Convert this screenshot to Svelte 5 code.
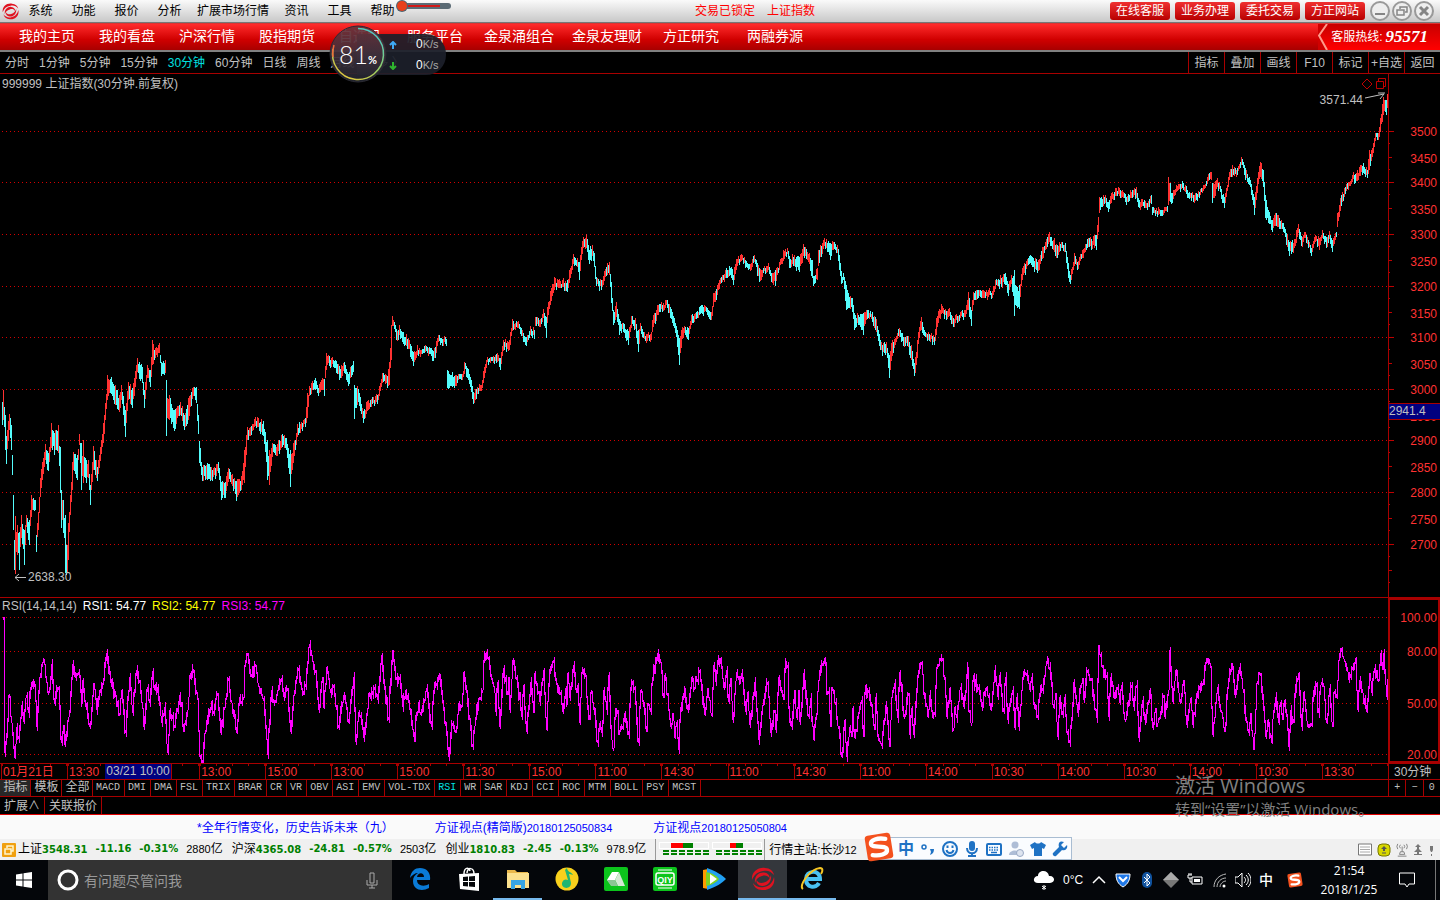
<script>
  const menus = ['系统', '功能', '报价', '分析', '扩展市场行情', '资讯', '工具', '帮助'];
  const services = ['在线客服', '业务办理', '委托交易', '方正网站'];
  const navs = ['我的主页', '我的看盘', '沪深行情', '股指期货', '自选股', '服务平台', '金泉涌组合', '金泉友理财', '方正研究', '两融券源'];
  const periods = ['分时', '1分钟', '5分钟', '15分钟', '30分钟', '60分钟', '日线', '周线', '月线', '更多 〉'];
  const tools = ['指标', '叠加', '画线', 'F10', '标记', '+自选', '返回'];
  const times = ['01月21日', '13:30', '', '13:00', '15:00', '13:00', '15:00', '11:30', '15:00', '11:00', '14:30', '11:00', '14:30', '11:00', '14:00', '10:30', '14:00', '10:30', '14:00', '10:30', '13:30'];
  const indicators = ['MACD', 'DMI', 'DMA', 'FSL', 'TRIX', 'BRAR', 'CR', 'VR', 'OBV', 'ASI', 'EMV', 'VOL-TDX', 'RSI', 'WR', 'SAR', 'KDJ', 'CCI', 'ROC', 'MTM', 'BOLL', 'PSY', 'MCST'];
  const quotes = [
    { name: '上证', last: '3548.31', diff: '-11.16', pct: '-0.31%', amount: '2880' },
    { name: '沪深', last: '4365.08', diff: '-24.81', pct: '-0.57%', amount: '2503' },
    { name: '创业', last: '1810.83', diff: '-2.45', pct: '-0.13%', amount: '978.9' }
  ];
  const gridY = [131, 182, 234, 286, 337, 389, 440, 492, 544];
  const priceMarks = [[3500, 131], [3450, 158], [3400, 182], [3350, 209], [3300, 234], [3250, 261], [3200, 286], [3150, 313], [3100, 337], [3050, 364], [3000, 389], [2950, 416], [2900, 440], [2850, 467], [2800, 492], [2750, 519], [2700, 544]];
  const rsiMarks = [['100.00', 617], ['80.00', 651], ['50.00', 703], ['20.00', 754]];

  // x, high, low
  const price = `2 402 425,3 390 420,5 415 450,6 436 464,9 414 430,11 425 450,12 455 475,13 495 530,14 540 570,15 516 574,17 525 555,19 532 570,21 515 538,24 530 565,26 515 527,29 520 545,31 495 517,33 498 510,35 500 510,36 535 552,38 512 530,40 478 497,42 462 480,45 444 460,48 453 471,51 423 448,54 433 455,58 425 453,60 447 493,61 490 528,63 500 533,65 515 573,66 545 575,67 545 573,68 523 560,70 495 515,72 462 490,73 452 470,77 455 480,79 434 445,81 443 490,83 440 483,86 460 483,88 460 478,90 485 505,93 446 470,97 467 481,100 447 460,103 423 443,105 403 420,107 375 400,110 379 393,115 385 405,119 395 412,121 385 400,125 410 437,128 382 400,132 388 408,137 358 372,142 367 383,144 390 408,147 365 378,150 370 387,152 340 365,155 348 358,159 343 353,161 362 376,165 360 373,166 380 436,169 395 420,174 410 431,180 402 415,184 415 430,188 398 420,192 388 398,196 387 403,198 415 434,199 441 463,202 467 481,207 463 480,212 470 481,218 462 473,221 482 500,225 482 498,228 468 482,232 474 486,236 481 501,241 476 490,244 450 483,247 427 440,250 427 436,255 417 426,263 421 436,267 440 480,269 450 485,272 443 455,277 444 456,281 435 448,286 438 450,290 450 487,295 440 450,297 424 436,305 418 427,307 393 418,309 386 396,315 378 390,318 388 396,322 378 390,324 379 396,326 353 370,329 356 366,333 360 367,339 366 380,344 362 373,348 374 386,353 361 372,354 385 419,358 389 402,363 411 423,368 400 410,377 395 404,382 373 380,387 376 388,389 362 385,391 325 360,392 316 326,397 331 341,399 325 335,403 332 344,408 338 349,413 352 366,417 345 355,420 350 357,425 345 352,432 350 361,435 347 358,438 335 342,446 339 346,447 370 388,454 376 388,462 374 380,464 362 371,468 369 380,473 392 404,479 384 391,481 385 391,484 367 378,487 357 362,493 356 363,497 353 362,500 358 370,503 340 350,509 340 350,512 319 328,517 322 328,521 328 336,526 337 346,530 326 333,534 330 339,535 317 326,540 319 327,543 309 318,546 317 338,548 302 311,551 288 301,554 277 290,560 281 288,567 280 292,569 270 283,573 254 264,577 258 267,579 262 280,582 241 252,586 234 248,589 250 264,592 245 256,594 253 267,596 277 286,601 280 290,604 271 280,609 262 275,611 282 303,613 310 325,616 302 317,619 320 335,623 323 332,628 331 345,631 316 325,635 318 329,638 330 352,640 323 331,646 334 343,651 332 340,652 320 332,657 305 315,663 303 311,667 300 308,670 307 318,675 323 333,678 335 355,679 338 365,681 330 348,684 326 333,688 328 340,691 315 325,697 311 318,702 305 314,707 308 315,711 312 320,713 293 307,717 285 295,721 277 283,726 268 278,731 267 278,733 275 285,736 259 270,741 254 261,745 260 268,750 264 271,754 255 262,759 268 282,763 268 273,768 263 270,771 274 282,775 270 286,779 262 268,784 251 259,787 248 254,789 258 268,794 255 266,799 257 272,803 244 256,808 254 262,812 260 278,813 276 286,817 268 280,818 250 266,824 238 246,830 243 260,832 241 250,837 245 253,839 255 270,841 273 284,843 273 280,846 285 310,849 297 308,852 298 312,854 313 330,858 315 325,863 313 335,866 310 320,870 311 317,875 317 330,878 330 341,882 345 356,886 342 353,889 355 378,892 340 356,895 338 345,899 328 337,903 337 346,907 336 346,911 345 360,914 363 376,917 340 358,919 327 335,921 317 330,925 332 337,928 332 340,934 337 345,936 318 335,941 304 313,946 311 320,949 308 316,953 318 327,960 312 318,965 310 317,968 292 310,971 310 326,973 292 302,978 290 298,988 290 297,992 291 298,995 280 288,1005 273 285,1008 284 296,1011 275 281,1014 270 316,1017 287 308,1019 285 309,1022 268 280,1030 255 263,1037 262 273,1043 247 258,1049 232 242,1056 244 258,1061 242 248,1065 243 252,1068 263 278,1070 275 284,1074 253 265,1077 262 270,1082 250 258,1088 238 247,1096 235 250,1098 217 230,1099 197 213,1105 195 203,1108 202 212,1111 193 203,1116 188 196,1122 190 197,1126 197 205,1130 190 198,1136 187 198,1139 200 208,1147 203 210,1151 195 204,1152 207 215,1160 210 216,1167 206 212,1168 177 205,1172 193 203,1176 185 192,1183 183 190,1187 191 198,1194 195 203,1202 188 193,1207 177 183,1211 172 180,1212 183 203,1217 178 187,1224 197 208,1228 177 183,1232 165 177,1236 170 177,1241 157 163,1245 168 180,1250 180 187,1254 197 215,1257 178 190,1260 162 177,1263 170 187,1265 195 218,1268 210 223,1272 220 232,1275 213 226,1283 223 232,1289 242 256,1293 243 253,1298 224 233,1302 237 247,1304 232 238,1311 248 256,1315 235 242,1319 238 250,1322 230 237,1326 237 248,1329 231 238,1332 240 252,1336 232 237,1337 213 227,1341 195 206,1345 187 194,1352 175 182,1357 170 181,1363 163 173,1367 170 178,1369 150 170,1372 148 157,1375 133 140,1378 133 140,1380 118 130,1383 97 115,1386 100 115,1387 94 107`
    .split(',').map((s) => s.split(' ').map(Number));

  let seed = 77;
  const rnd = () => ((seed = (seed * 16807) % 2147483647) / 2147483647);

  function candles() {
    const out = { up: '', down: '' };
    let prev = 400;
    for (let i = 0; i < price.length; i++) {
      const [x0, h0, l0] = price[i];
      const [x1, h1, l1] = price[i + 1] ?? [x0 + 1, h0, l0];
      for (let x = x0; x < x1; x++) {
        const t = (x - x0) / (x1 - x0);
        let hi = h0 + (h1 - h0) * t;
        let lo = l0 + (l1 - l0) * t;
        if (x !== x0) {
          const mid = (hi + lo) / 2 + (rnd() - 0.5) * 5;
          const half = Math.min(10, ((lo - hi) / 2) * (0.6 + rnd() * 0.5));
          hi = mid - half;
          lo = mid + half;
        }
        const mid = (hi + lo) / 2;
        const key = mid - prev + (rnd() - 0.45) * 8 > 0 ? 'down' : 'up';
        if (Math.abs(mid - prev) < 9) {
          if (prev < hi) hi = prev;
          if (prev > lo) lo = prev;
        }
        prev = mid;
        out[key] += `M${x}.5 ${Math.round(hi) - 74}V${Math.round(lo) - 74}`;
      }
    }
    return out;
  }
  const bars = candles();

  // Turning points in thirds of a pixel, in three stretches of the time axis.
  const stretches = [
    [0, 0, '10 82,13 490,18 430,25 315,33 400,43 505,48 410,55 445,63 345,68 395,77 315,83 370,92 275,103 290,108 410,118 260,125 215,133 225,140 310,147 290,154 222,160 330,173 290,182 460,188 405,193 465,205 380,217 222,225 265,235 245,245 380,247 270,255 350,268 410,280 280,287 360,297 300,308 265,318 190,330 280,345 320,357 375,362 300,374 430,387 260,395 370,408 240,418 280,430 410,440 290,448 340,456 242,462 300,472 290,482 400,493 350,500 490,508 360,522 405,538 315,550 425,560 360,568 255,578 250,590 330,597 500,605 510,615 420,630 350,640 365,650 310,660 430,672 350,683 265,693 340,708 430,717 320,728 325,733 225,741 190,750 260,765 230,775 290,790 330,800 495,812 300,820 340,830 300,842 265,848 320,860 300,870 425,882 300,893 235,903 300,915 290,925 170,935 215,945 250,955 360,965 260,968 355,979 230,990 310,1000 290,1013 410,1030 315,1043 400,1060 260,1065 455,1075 365,1090 445,1105 310,1115 315,1122 290,1130 330,1143 195,1153 300,1163 385,1175 180,1187 265,1197 260,1205 350,1215 300,1228 360,1240 440,1255 335,1260 375,1278 295,1292 410,1298 300,1315 255,1327 340,1344 500,1355 400,1365 425,1375 340,1383 345,1390 245,1397 310,1415 470,1425 380,1437 320'],
    [1440, 120, '0 205,7 180,10 90,18 65,25 85,32 150,40 170,46 245,50 155,58 290,68 115,80 195,85 140,88 240,97 90,108 140,123 260,128 165,137 305,150 155,158 250,163 130,178 215,188 120,197 300,203 160,218 90,228 165,240 185,245 245,255 175,260 250,262 130,268 205,278 105,287 190,292 165,296 280,303 125,315 140,320 240,328 270,331 185,340 240,350 340,357 280,364 310,370 180,378 240,383 135,392 330,399 355,403 260,410 240,415 315,425 290,432 250,443 315,450 170,462 170,473 340,480 180,490 230,498 305,502 220,510 245,515 140,532 68,540 100,548 205,553 135,560 190,570 290,577 250,583 325,587 275,593 360,600 230,610 190,622 240,633 140,642 170,658 120,672 255,682 175,692 255,700 105,706 155,712 90,721 85,730 175,737 120,743 215,750 145,757 270,768 125,775 150,784 130,795 245,801 185,808 285,823 155,835 330,847 225,860 155,871 310,881 240,886 300,895 140,908 210,912 115,920 105,926 280,934 290,941 180,948 265,955 180,958 275,970 130,983 260,990 205,998 330,1008 250,1013 150,1025 105,1037 90,1038 195,1045 185,1050 290,1054 170,1065 215,1073 295,1083 380,1092 270,1097 380,1107 290,1112 320,1115 235,1122 325,1135 245,1143 210,1148 320,1153 185,1163 180,1172 230,1182 300,1186 200,1192 320,1202 345,1216 225,1227 350,1232 200,1242 160,1250 265,1257 125,1270 260,1283 190,1288 315,1292 235,1300 315,1313 120,1324 95,1330 195,1342 260,1348 195,1355 265,1362 250,1367 110,1385 90,1393 150,1398 260,1408 175,1412 260,1418 295,1422 230,1428 265,1437 180'],
    [2820, 0, '60 290,70 350,83 215,85 365,92 400,97 270,115 290,123 350,137 290,150 360,163 240,170 320,178 255,188 365,194 260,200 390,215 300,223 415,227 320,235 410,245 260,255 250,267 300,272 260,280 345,292 380,297 310,307 300,317 212,328 230,338 355,345 310,350 440,357 320,367 375,373 320,378 430,388 460,400 275,410 370,425 265,428 330,440 240,450 265,467 385,475 165,485 235,498 255,505 380,510 260,520 325,530 290,537 340,543 285,552 390,572 285,578 350,587 285,595 445,605 330,613 390,628 300,635 415,645 355,648 410,658 380,668 315,672 380,683 300,686 180,697 335,706 240,718 335,728 270,738 405,750 325,755 405,768 310,785 280,799 205,810 235,815 435,822 380,830 290,842 365,852 425,863 265,874 220,882 315,898 232,908 310,918 400,923 430,929 370,940 480,948 280,960 255,975 440,982 390,993 460,998 360,1006 320,1013 400,1020 335,1025 390,1030 340,1038 380,1045 470,1050 360,1058 400,1062 310,1073 250,1082 410,1090 305,1100 410,1113 400,1118 300,1127 290,1133 370,1140 285,1148 290,1157 400,1167 295,1175 410,1180 305,1187 325,1195 210,1204 175,1212 215,1225 270,1235 230,1245 205,1250 360,1257 270,1265 310,1277 365,1287 250,1292 310,1303 235,1313 270,1319 190,1325 240,1328 190,1337 320,1343 265']
  ];
  function rsiPath() {
    const pts = stretches.flatMap(([dx, dy, s]) => s.split(',').map((p) => {
      const [x, y] = p.split(' ').map(Number);
      return [(x + dx) / 3, (y + dy) / 3 - 8];
    }));
    let d = '';
    let last = pts[0][1];
    pts.forEach(([x0, y0], i) => {
      const [x1, y1] = pts[i + 1] ?? [x0 + 1, y0];
      for (let x = Math.round(x0); x < Math.round(x1); x++) {
        const t = (x - x0) / (x1 - x0);
        const edge = x === Math.round(x0);
        const y = edge ? y0 : y0 + (y1 - y0) * t + (rnd() - 0.5) * 10;
        const grow = edge ? 0 : rnd() * 5;
        const a = Math.round(Math.min(last, y) - grow);
        const b = Math.max(a + 3, Math.round(Math.max(last, y) + grow));
        d += `M${x}.5 ${a}V${b}`;
        last = y;
      }
    });
    return d;
  }
  const rsi = rsiPath();
</script>

{#snippet swirl()}
  <svg viewBox="0 0 24 24"><g fill="#e01220"><path d="M1 13C0 5 7 0 14 1c5 0 8 3 9 7-3-4-7-5-11-4C6 5 3 8 1 13z"/><path d="M23 10c2 8-5 14-12 13-5 0-8-3-9-7 3 4 7 5 11 4 6-1 9-5 10-10z"/><path d="M4 16C3 9 8 5 13 5.500c4 .5 6 3 5.500 6C17 8.500 14 8 11 9c-4 1-6 3.500-7 7z"/><path d="M20 8c1 7-4 11.500-9 11-4-.5-6-3-5.500-6 1.500 3 4.500 3.500 7.500 2.500 4-1 6-4 7-7.500z"/></g></svg>
{/snippet}
{#snippet sogou()}
  <svg viewBox="0 0 28 28"><g transform="rotate(-9 14 14)"><rect x="2" y="2" width="24" height="24" rx="3" fill="#f4511e"/><path fill="none" stroke="#fff" stroke-width="4" stroke-linecap="round" d="M21 7.500C14 5 7 6.500 7 10C7 14.500 21 12.500 21 17.500C21 22 13 22.500 7 20.500"/></g></svg>
{/snippet}

<div class="app">
  <header class="title">
    <span class="logo">{@render swirl()}</span>
    <nav class="menus">{#each menus as m}<button>{m}</button>{/each}</nav>
    <p class="locked"><span>交易已锁定</span><span>上证指数</span></p>
    <div class="services">{#each services as s}<button>{s}</button>{/each}</div>
    <div class="winbtns">
      <button aria-label="最小化"><svg viewBox="0 0 20 20"><circle cx="10" cy="10" r="9"/><path d="M5 13h10" stroke-width="2"/></svg></button>
      <button aria-label="还原"><svg viewBox="0 0 20 20"><circle cx="10" cy="10" r="9"/><path d="M8 8V6h7v5h-2M5 9h7v5H5z" stroke-width="1.500"/></svg></button>
      <button aria-label="关闭"><svg viewBox="0 0 20 20"><circle cx="10" cy="10" r="9"/><path d="M6 6l8 8M14 6l-8 8" stroke-width="3"/></svg></button>
    </div>
  </header>

  <div class="nav">
    <nav>{#each navs as n}<a href="#nav">{n}</a>{/each}</nav>
    <div class="hotline">
      <svg viewBox="0 0 10 27" preserveAspectRatio="none"><path d="M0 0H9L1 12L9 27H0z" fill="#d00000"/><path d="M9 0L1 12L9 27" fill="none" stroke="#ff9a8a" stroke-width="2"/></svg>
      <span>客服热线:</span><b>95571</b>
    </div>
  </div>

  <div class="toolbar">
    <div class="periods">{#each periods as p}<button class:on={p === '30分钟'}>{p}</button>{/each}</div>
    <div class="tools">{#each tools as t}<button>{t}</button>{/each}</div>
  </div>

  <section class="chart">
    <div class="plot">
      <svg viewBox="0 0 1388 523" preserveAspectRatio="none" shape-rendering="crispEdges" aria-label="K线图">
        {#each gridY as y}<path class="dots" d="M2 {y - 74 + 0.5}H1388"/>{/each}
        <path class="up" d={bars.up}/>
        <path class="down" d={bars.down}/>
      </svg>
      <h1>999999 上证指数(30分钟.前复权)</h1>
      <span class="low"><svg viewBox="0 0 13 9"><path d="M12 4.500H1M5 1L1 4.500L5 8"/></svg>2638.30</span>
      <span class="high">3571.44<svg viewBox="0 0 22 12"><path d="M1 6L20 2M14 1H21M20 2L16 7"/></svg></span>
      <span class="marks"><svg viewBox="0 0 26 12"><path d="M6 1l5 5-5 5-5-5zM15.500 3.500h7v7h-7zM17.500 3V.5h7v8h-2"/></svg></span>
    </div>
    <div class="axis">
      <svg viewBox="0 0 51 523">
        <g shape-rendering="crispEdges">
          {#each gridY as y}<path class="tick" d="M0 {y - 73.5}h5M0 {y - 47.5}h3M0 {y - 61.5}h1M0 {y - 35.5}h1"/>{/each}
        </g>
        {#each priceMarks as [v, y]}<text x="48" y={y - 69} text-anchor="end">{v}</text>{/each}
      </svg>
      <span class="cursor">2941.4</span>
    </div>
  </section>

  <section class="rsi">
    <div class="plot">
      <svg viewBox="0 0 1388 165" preserveAspectRatio="none" shape-rendering="crispEdges" aria-label="RSI">
        {#each rsiMarks as [, y]}<path class="dots" d="M2 {y - 597.5}H1388"/>{/each}
        <path class="mag" d={rsi}/>
      </svg>
      <p class="legend"><span>RSI(14,14,14)</span><span class="w">RSI1: 54.77</span><span class="y">RSI2: 54.77</span><span class="m">RSI3: 54.77</span></p>
    </div>
    <div class="axis boxed">
      <svg viewBox="2 2 51 165">{#each rsiMarks as [v, y]}<text x="49" y={y - 593} text-anchor="end">{v}</text>{/each}</svg>
    </div>
  </section>

  <div class="time">
    <div class="cells">{#each times as t}<span>{t}</span>{/each}<em>03/21 10:00</em></div>
    <div class="unit">30分钟</div>
  </div>

  <div class="inds">
    <button class="cn sel">指标</button><button class="cn">模板</button><button class="cn">全部</button>
    {#each indicators as i}<button class:on={i === 'RSI'}>{i}</button>{/each}
    <div class="zoomers"><button>+</button><button>−</button><button>0</button></div>
  </div>
  <div class="ext"><button>扩展∧</button><button>关联报价</button></div>

  <div class="news">
    <a href="#n1">*全年行情变化，历史告诉未来（九）</a>
    <a href="#n2">方证视点(精简版)<span>20180125050834</span></a>
    <a href="#n3">方证视点<span>20180125050804</span></a>
  </div>

  <div class="status">
    <svg class="pin" viewBox="0 0 14 14"><rect width="14" height="14" rx="1" fill="#f0a010"/><path d="M5 5V3h6v5H9M3 6h6v5H3z" fill="none" stroke="#fff5cc" stroke-width="1.500"/></svg>
    {#each quotes as q}
      <div class="quote"><span>{q.name}<b>{q.last}</b></span><b>{q.diff}</b><b>{q.pct}</b><span><i>{q.amount}</i>亿</span></div>
    {/each}
    <div class="gauges">
      {#each [[12, 12, 10], [18, 6, 7]] as [off, r, g]}
        <svg viewBox="0 0 50 15" shape-rendering="crispEdges"><path d="M.5 .5h49v6H.5z" fill="#f0f0f0" stroke="#fff"/><path d="M{off} 1h{r}v5h-{r}z" fill="#f00"/><path d="M{off + r} 1h{g}v5h-{g}z" fill="#008000"/><path d="M4 9h46M4 12h46" stroke="#008000" stroke-width="2" stroke-dasharray="6 2"/></svg>
      {/each}
    </div>
    <span class="host">行情主站:长沙<i>12</i></span>
    <div class="sysicons">
      <svg viewBox="0 0 14 14"><path d="M.5 1h13v11H.5z" fill="#fff" stroke="#777"/><path d="M2 4h10M2 6.500h10M2 9h10" stroke="#aaa"/></svg>
      <svg viewBox="0 0 14 14"><rect x="1" y="1" width="12" height="12" rx="4" fill="#d8d800" stroke="#777700"/><path d="M7 3l3 3H8v2H6V6H4zM5 9.500h4v1H5z" fill="#555"/></svg>
      <svg viewBox="0 0 14 16"><path d="M7 4v6M5 10h4l1 3H4zM2 15h10M5 2L4 4l1 2M9 2l1 2-1 2M2 1L1 4l1 3M12 1l1 3-1 3" fill="none" stroke="#777"/></svg>
      <svg viewBox="0 0 10 14"><path d="M5 1l3 3H6v2l3 3H6v2h3v1H1v-1h3V9H1l3-3V4H2z" fill="#777"/></svg>
      <svg viewBox="0 0 6 14"><path d="M2 3h3v4l-1 2H3L2 7zM3 11h1v2H3z" fill="#777"/></svg>
    </div>
    <div class="ime">
      <span class="sg">{@render sogou()}</span>
      <b>中</b>
      <svg viewBox="0 0 16 16"><circle cx="4" cy="6" r="2" fill="none" stroke="#1f72c4" stroke-width="1.500"/><path d="M10 8h4c0 3-1 5-4 6l1-3z" fill="#1f72c4"/></svg>
      <svg viewBox="0 0 16 16" fill="none" stroke="#1f72c4" stroke-width="2"><circle cx="8" cy="8" r="7"/><path d="M4.500 9c1 4 6 4 7 0M5.500 4.500v2.500M10.500 4.500v2.500"/></svg>
      <svg viewBox="0 0 16 16"><rect x="5" y="0" width="6" height="10" rx="3" fill="#1f72c4"/><path d="M3 7c0 7 10 7 10 0M8 12v3M4 15h8" fill="none" stroke="#1f72c4" stroke-width="2"/></svg>
      <svg viewBox="0 0 16 16"><rect x="1" y="3" width="14" height="11" rx="1" fill="none" stroke="#1f72c4" stroke-width="2"/><path d="M3 6.500h10M3 9h10" stroke="#1f72c4" stroke-width="1.500" stroke-dasharray="1.500 1"/><path d="M5 11.500h6" stroke="#1f72c4" stroke-width="1.500"/></svg>
      <svg viewBox="0 0 16 16"><circle cx="7" cy="4" r="3.500" fill="#aebdd6"/><path d="M1 14c0-6 12-6 12 0z" fill="#aebdd6"/><circle cx="12" cy="12" r="3.500" fill="#dde4f0" stroke="#98a8c4"/></svg>
      <svg viewBox="0 0 16 16"><path d="M5 1c1 2 5 2 6 0l5 3-2 4-2-1v8H4V7L2 8 0 4z" fill="#1f72c4"/></svg>
      <svg viewBox="0 0 16 16"><path d="M15 4l-3 3-3-3 3-3C7-1 6 3 7 6L1 12c-1 2 1 4 3 3l6-6c4 1 6-2 5-5z" fill="#1f72c4"/></svg>
    </div>
  </div>

  <footer class="taskbar">
    <button class="start" aria-label="开始"><svg viewBox="0 0 16 16"><path fill="#fff" d="M0 2.500L6.500 1.500V7.500H0zM7.500 1.300L16 0V7.500H7.500zM0 8.500H6.500V14.500L0 13.500zM7.500 8.500H16V16L7.500 14.700z"/></svg></button>
    <div class="search">
      <svg viewBox="0 0 22 22"><circle cx="11" cy="11" r="9" fill="none" stroke="#fff" stroke-width="3"/></svg>
      <input aria-label="搜索" placeholder="有问题尽管问我">
      <svg class="mic" viewBox="0 0 12 17"><path d="M4 1h4v10H4zM1 8v5h10V8M6 13v3M3 16h6" fill="none" stroke="#aaa"/></svg>
    </div>
    <div class="apps">
      <button aria-label="Edge"><svg viewBox="0 0 24 24"><path fill="#0a7ad6" d="M2 11C3 4 7 1 12 1c7 0 11 5 10 12H9c0 6 7 7 12 4v4C14 25 5 23 5 14c0-4 2-6 5-8-3 0-6 2-8 5zM9 10h7c0-5-6-5-7 0z"/></svg></button>
      <button aria-label="商店"><svg viewBox="0 0 24 24"><path d="M7 7c0-7 5-7 6-3M10 6c0-6 7-6 7 1" fill="none" stroke="#fff" stroke-width="1.500"/><path fill="#fff" d="M2 7l20-1v18L3 22z"/><path fill="#05070a" d="M6 10l5-.5v4.500H6zM12 9.500l6-.5v5h-6zM6 15h5v4.500L6 19zM12 15h6v5l-6-.5z"/></svg></button>
      <button aria-label="文件" class="open"><svg viewBox="0 0 24 24"><path fill="#e9b74b" d="M1 3h8l2 2h11v4H1z"/><path fill="#fbe08e" d="M1 6h22v15H1z"/><path fill="#37a5e5" d="M5 13h14v9h-4v-4H9v4H5z"/></svg></button>
      <button aria-label="QQ音乐"><svg viewBox="0 0 24 24"><circle cx="12" cy="12" r="11.500" fill="#f9d01c"/><path d="M12 1c0 4 5 4 6 7-2-1-3-1-4-1l2 9c0 7-10 6-9 0 1-4 4-4 6-3L10 3z" fill="#20b573"/></svg></button>
      <button aria-label="浏览"><svg viewBox="0 0 24 24"><rect width="24" height="24" rx="2" fill="#0cc41c"/><path fill="#fff" d="M8 5h7l-4 8-4 5-4-5z"/><path fill="#d4e9d4" d="M15 5l6 14h-7l-3-6z"/><path fill="#8cc695" d="M3 13h8l3 6H7z"/></svg></button>
      <button aria-label="爱奇艺"><svg viewBox="0 0 24 24"><rect width="24" height="24" rx="2" fill="#0cc41c"/><rect x="3" y="6" width="18" height="12" rx="2" fill="none" stroke="#fff" stroke-width="1.500"/><path d="M5 3h14M5 21h14" stroke="#fff"/><text x="12" y="16" text-anchor="middle" font-size="9" font-weight="700" fill="#fff">QIY</text></svg></button>
      <button aria-label="视频"><svg viewBox="0 0 24 24"><path fill="#ff9800" d="M1 3l5-1v20l-5-1z"/><path fill="#21a0f3" d="M5 1c9 3 15 7 19 11-4 4-10 8-19 11z"/><path fill="#7ed321" d="M4 5c6 1 11 4 13 7-2 3-7 6-13 7z"/><path fill="#fff" d="M8 7l7 5-7 5z"/></svg></button>
      <button aria-label="方正" class="active">{@render swirl()}</button>
      <button aria-label="IE" class="open"><svg viewBox="0 0 24 24"><path fill="none" stroke="#49c1f2" stroke-width="4" d="M7 12h13C20 2 6 3 6 12c0 9 10 10 13 4"/><path fill="none" stroke="#f6c624" stroke-width="2" d="M3 22C-2 19 10 2 20 1c3 0 3 3 1 6"/></svg></button>
    </div>
    <div class="tray">
      <svg class="big" viewBox="0 0 22 22"><path fill="#fff" d="M5 14C-1 14 0 7 5 7c0-6 10-7 11 0 6-1 7 7 1 7z"/><path stroke="#fff" d="M11 16v5M9 17l4 3M13 17l-4 3"/></svg>
      <span class="temp">0°C</span>
      <svg viewBox="0 0 16 16"><path d="M2 11l6-6 6 6" fill="none" stroke="#fff" stroke-width="1.500"/></svg>
      <svg viewBox="0 0 16 16"><path fill="#1f78e8" stroke="#fff" d="M1 2c5 0 9 0 14 0 0 6-2 10-7 13C3 12 1 8 1 2z"/><path d="M4 5l4 4 4-4" fill="none" stroke="#fff" stroke-width="2"/></svg>
      <svg viewBox="0 0 16 16"><rect x="3" width="10" height="16" rx="5" fill="#10529e"/><path d="M5 5l6 6-3 3V2l3 3-6 6" fill="none" stroke="#fff"/></svg>
      <svg viewBox="0 0 16 16"><path d="M8 0l8 8-8 8-8-8z" fill="#777"/><path d="M8 0l8 8H0z" fill="#aaa"/></svg>
      <svg viewBox="0 0 16 16"><path d="M5 5h10v7H5zM1 3h4M2 1v2M4 1v2M1 3v3h4M3 6v4h2" fill="none" stroke="#fff"/><path fill="#fff" d="M7 7h6v3H7z"/></svg>
      <svg viewBox="0 0 16 16"><path d="M3 15C3 8 8 3 15 2M6 15c0-5 4-9 9-9M9 15c0-3 3-6 6-6" fill="none" stroke="#bbb"/><circle cx="13" cy="14" r="1.500" fill="#fff"/></svg>
      <svg viewBox="0 0 16 16"><path d="M0 5h3l4-4v14l-4-4H0zM9 5c2 2 2 4 0 6M11 3c3 3 3 7 0 10M13 1c4 4 4 10 0 14" fill="none" stroke="#fff"/></svg>
      <b>中</b>
      <span class="s2">{@render sogou()}</span>
      <p class="clock"><span>21:54</span><span>2018/1/25</span></p>
      <svg class="note" viewBox="0 0 16 16"><path d="M0.500 1h15v11H10l-2 3-2-3H.5z" fill="none" stroke="#fff"/></svg>
    </div>
    <span class="peek"></span>
  </footer>

  <div class="mark" aria-hidden="true"><span>激活 Windows</span><small>转到“设置”以激活 Windows。</small></div>

  <div class="speed">
    <div class="rates">
      <p><svg viewBox="0 0 8 8"><path d="M4 8V1M1 4l3-3 3 3" stroke="#3fa9f5"/></svg><b>0</b>K/s</p>
      <p><svg viewBox="0 0 8 8"><path d="M4 0v7M1 4l3 3 3-3" stroke="#2fb52f"/></svg><b>0</b>K/s</p>
    </div>
    <div class="dial">
      <svg viewBox="0 0 58 58"><defs><linearGradient id="ring" x1="0.8" y1="0" x2="0.2" y2="1"><stop offset="0" stop-color="#45c9d0"/><stop offset=".5" stop-color="#8fd06a"/><stop offset="1" stop-color="#e8c63a"/></linearGradient><linearGradient id="glass" x1="0" y1="0" x2="0" y2="1"><stop offset="0" stop-color="#6a3038"/><stop offset=".5" stop-color="#40303c"/><stop offset="1" stop-color="#20242e"/></linearGradient></defs><circle cx="29" cy="29" r="28" fill="url(#glass)" fill-opacity=".93" stroke="#2a2a33"/><path d="M29 3.500A25.500 25.500 0 1 1 4 24" fill="none" stroke="url(#ring)" stroke-width="1.500"/><path d="M4 32Q3 26 5 20" fill="none" stroke="#ef6a3a" stroke-width="1.500"/></svg>
      <span>81<small>%</small></span>
    </div>
  </div>
  <svg class="thermo" viewBox="0 0 56 13"><rect x="8" y="3" width="47" height="6" rx="3" fill="#5b6b75"/><path d="M8 6h36" stroke="#d01818" stroke-width="2"/><circle cx="6" cy="6" r="6" fill="#506470"/><circle cx="6" cy="6" r="5" fill="#e8401c"/></svg>
</div>

<style>
  :global(body) { margin: 0; background: #000; }
  .app { position: relative; display: flex; flex-direction: column; min-height: 100vh; background: #000; color: #c0c0c0; font: 12px/16px "Liberation Sans", "Noto Sans CJK SC", sans-serif; overflow: hidden; }
  p, h1 { margin: 0; font: inherit; }
  button { background: none; border: 0; padding: 0; margin: 0; font: inherit; color: inherit; white-space: nowrap; }
  a { color: inherit; text-decoration: none; white-space: nowrap; }
  svg { display: block; }
  i, em { font-style: normal; }

  .title { display: flex; align-items: center; height: 23px; background: linear-gradient(#fafafa, #c8c8c8); color: #000; box-sizing: border-box; border-bottom: 1px solid #777; }
  .logo { width: 17px; margin-left: 2px; }
  .menus { display: flex; }
  .menus button { min-width: 43px; padding: 0 6px; }
  .locked { display: flex; gap: 12px; color: #f00; margin-left: auto; margin-right: 295px; }
  .services { display: flex; gap: 5px; }
  .services button { width: 60px; height: 18px; border-radius: 3px; background: linear-gradient(#f03030, #b80000); color: #fff; }
  .winbtns { display: flex; gap: 2px; margin: 0 6px 0 5px; }
  .winbtns svg { width: 20px; height: 20px; fill: none; stroke: #858585; }
  .winbtns circle { stroke: #999; stroke-width: 2; fill: #eee; }

  .nav { display: flex; justify-content: space-between; height: 29px; box-sizing: border-box; border-top: 1px solid #d33; border-bottom: 2px solid #808080; background: linear-gradient(#ff2c2c, #d00000 60%, #a80000); color: #fff; font-size: 14px; line-height: 25px; }
  .nav nav { display: grid; grid-template-columns: repeat(4, 80px) 66px 84px 84px 92px 76px 92px; padding-left: 7px; text-align: center; }
  .hotline { display: flex; align-items: center; gap: 3px; padding-right: 12px; background: linear-gradient(#c80000, #f00); font-size: 12px; }
  .hotline svg { width: 10px; height: 26px; }
  .hotline b { font: italic 700 17px "Liberation Serif", serif; }

  .toolbar { display: flex; justify-content: space-between; height: 22px; line-height: 20px; box-sizing: border-box; border-bottom: 1px solid #a80000; }
  .periods { display: flex; gap: 10px; padding-left: 5px; }
  .on { color: #00e0e0; }
  .tools { display: flex; }
  .tools button { width: 36px; border-left: 1px solid #a80000; box-sizing: border-box; }

  .chart { flex: 1; min-height: 420px; display: flex; border-bottom: 1px solid #a80000; }
  .plot { position: relative; flex: 1; min-width: 0; overflow: hidden; }
  .plot > svg { position: absolute; width: 100%; height: 100%; }
  .dots { stroke: #d40000; stroke-dasharray: 1 3; }
  .up { stroke: #ff3232; } .down { stroke: #54fcfc; } .mag { stroke: #f0f; }
  h1 { position: relative; padding: 2px; }
  .low { position: absolute; left: 14px; bottom: 12px; display: flex; align-items: center; gap: 1px; }
  .low svg { width: 13px; height: 9px; }
  .high { position: absolute; right: 2px; top: 18px; display: flex; gap: 1px; }
  .high svg { width: 22px; height: 12px; }
  .low path, .high path { fill: none; stroke: #c0c0c0; }
  .marks { position: absolute; right: 1px; top: 4px; }
  .marks svg { width: 26px; height: 12px; fill: none; stroke: #c00000; }
  .axis { position: relative; width: 51px; border-left: 1px solid #a80000; }
  .axis svg { position: absolute; inset: 0; width: 51px; height: 100%; }
  .axis text { fill: #ff3232; font-size: 12px; }
  .tick { stroke: #c00000; }
  .cursor { position: absolute; left: 0; right: 0; top: 329px; height: 15px; line-height: 14px; background: #000080; border-top: 1px solid #a80000; border-bottom: 1px solid #a80000; }

  .rsi { display: flex; height: 165px; border-bottom: 1px solid #a80000; }
  .boxed { border: 2px solid #a80000; width: 48px; }
  .boxed svg { height: 165px; }
  .legend { position: relative; display: flex; gap: 6px; padding-left: 2px; }
  .w { color: #fff; } .y { color: #ff0; } .m { color: #f0f; }

  .time { display: flex; height: 15px; border-bottom: 1px solid #a80000; line-height: 16px; }
  .cells { position: relative; flex: 1; display: grid; grid-template-columns: repeat(21, 1fr); color: #ff3232; padding-left: 1px; }
  .cells span { border-left: 1px solid #a80000; padding-left: 1px; background: repeating-linear-gradient(90deg, #a80000 0 1px, #0000 1px 16px) 0 0 / 100% 2px no-repeat; white-space: nowrap; overflow: hidden; }
  .cells em { position: absolute; left: 105px; top: 0; width: 66px; background: #000080; color: #c0c0c0; border-right: 1px solid #a80000; white-space: nowrap; text-align: center; line-height: 15px; }
  .unit { width: 46px; padding-left: 5px; border-left: 1px solid #a80000; }

  .inds { display: flex; height: 16px; border-bottom: 1px solid #a80000; font: 10px/16px "Liberation Mono", "Noto Sans CJK SC", monospace; }
  .inds > button { border-right: 1px solid #a80000; padding: 0 4px 0 3px; }
  .inds > .cn { font-size: 12px; width: 31px; padding: 0 2px 0 3px; box-sizing: border-box; }
  .sel { background: #282828; }
  .zoomers { display: flex; margin-left: auto; width: 52px; }
  .zoomers button { flex: 1; border-left: 1px solid #a80000; }
  .ext { display: flex; height: 17px; border-bottom: 1px solid #e00000; line-height: 16px; }
  .ext button { padding: 0 4px; border-right: 1px solid #a80000; }

  .news { display: flex; gap: 41px; height: 24px; padding-left: 197px; background: #fafafa; line-height: 26px; color: #00f; }
  .news span, i { font-size: 11px; }
  .status { position: relative; display: flex; align-items: center; height: 21px; background: #f0f0f0; color: #000; white-space: nowrap; }
  .pin { width: 14px; height: 14px; margin: 0 2px; }
  .quote { display: flex; gap: 8px; margin-right: 9px; }
  .quote b { color: #008000; font: 700 10px/16px "DejaVu Sans", sans-serif; }
  .gauges { display: flex; gap: 2px; border-left: 1px solid #999; border-right: 1px solid #999; padding: 3px 2px; }
  .gauges svg { width: 51px; height: 15px; }
  .host { padding-left: 4px; }
  .sysicons { display: flex; align-items: center; gap: 5px; margin-left: auto; padding-right: 6px; }
  .sysicons svg { height: 14px; }
  .ime { position: absolute; left: 880px; bottom: 0; display: flex; align-items: center; gap: 6px; height: 23px; width: 192px; box-sizing: border-box; padding-left: 17px; border: 1px solid #a9bdd2; background: #fafcff; }
  .ime > svg { width: 16px; height: 16px; }
  .ime b { color: #1f72c4; font-size: 16px; }
  .sg { position: absolute; left: -17px; top: -6px; width: 30px; }

  .taskbar { display: flex; height: 40px; background: #04060a; color: #fff; }
  .start { width: 48px; display: grid; place-items: center; }
  .start svg { width: 16px; }
  .search { display: flex; align-items: center; gap: 5px; width: 344px; box-sizing: border-box; padding: 0 14px 0 9px; background: #333; }
  .search svg { width: 22px; }
  .search .mic { width: 12px; }
  .search input { flex: 1; min-width: 0; border: 0; padding: 0; background: none; font: 14px "Noto Sans CJK SC", sans-serif; color: #fff; }
  .search input::placeholder { color: #999; }
  .apps { display: flex; padding-left: 3px; }
  .apps button { width: 49px; display: grid; place-items: center; box-sizing: border-box; border-bottom: 2px solid transparent; }
  .apps button > :global(svg) { width: 24px; height: 24px; }
  .apps .open { border-color: #76b9ed; }
  .apps .active { background: #34373c; border-color: #76b9ed; }
  .tray { display: flex; align-items: center; gap: 8px; margin-left: auto; padding-right: 20px; }
  .tray svg { width: 16px; height: 16px; }
  .tray .big { width: 22px; height: 22px; }
  .temp { width: 20px; }
  .tray b { font-size: 14px; font-weight: 500; }
  .s2 { width: 16px; margin-left: 6px; }
  .clock { display: flex; flex-direction: column; width: 68px; margin: 0 8px 0 4px; text-align: center; line-height: 19px; font-family: "Open Sans", sans-serif; }
  .peek { width: 4px; border-left: 1px solid #777; }

  .mark { position: absolute; right: 65px; bottom: 79px; width: 200px; height: 48px; display: flex; flex-direction: column; color: #818181; font: 20px/26px "Open Sans", "Noto Sans CJK SC", sans-serif; white-space: nowrap; }
  .mark small { font-size: 15px; line-height: 21px; }
  .speed { position: absolute; left: 329px; top: 25px; width: 117px; height: 58px; }
  .rates { position: absolute; left: 28px; top: 9px; width: 89px; height: 41px; box-sizing: border-box; padding-left: 32px; border-radius: 0 20px 20px 0; background: #1c202aeb; color: #aaa; font-size: 11px; line-height: 21px; }
  .rates p { display: flex; align-items: center; }
  .rates svg { width: 8px; height: 8px; margin-right: 19px; fill: none; stroke-width: 2; }
  .rates b { color: #fff; font-weight: 400; font-size: 12px; }
  .dial { position: absolute; inset: 0 auto auto 0; width: 58px; height: 58px; }
  .dial svg { position: absolute; width: 58px; }
  .dial span { position: relative; display: block; text-align: center; font: 300 25px/58px Lato, sans-serif; color: #fff; }
  .dial small { font-size: 11px; font-weight: 700; }
  .thermo { position: absolute; left: 396px; top: 0; width: 56px; height: 13px; }
</style>
